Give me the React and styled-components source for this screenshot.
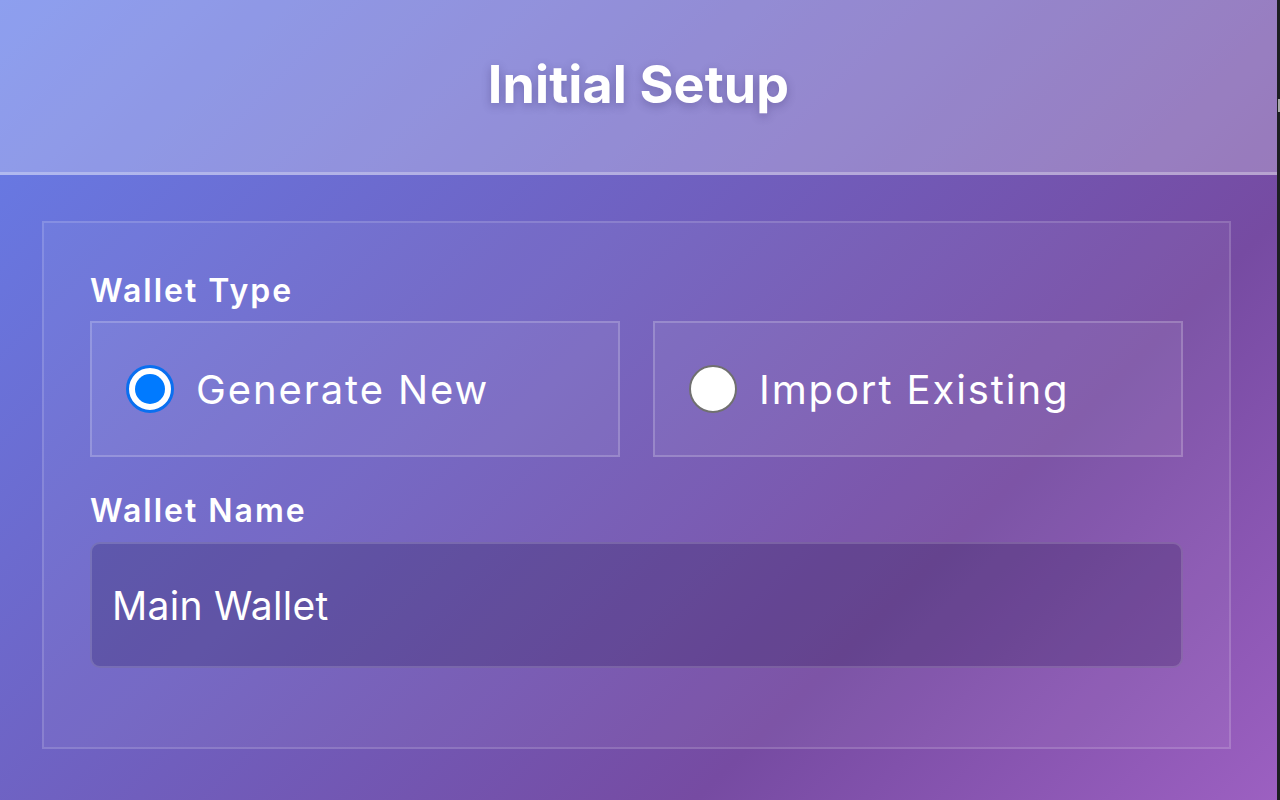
import React from "react";
import styled, { createGlobalStyle } from "styled-components";

const Global = createGlobalStyle`
  html, body { margin: 0; padding: 0; height: 100%; overflow: hidden; }
  body { font-family: Inter, "Noto Sans", "Liberation Sans", sans-serif; }
  #root { height: 100%; }
`;

const Page = styled.div`
  display: flex;
  width: 1280px;
  height: 800px;
  background: #1d1f22;
`;

const Main = styled.div`
  flex: 1;
  display: flex;
  flex-direction: column;
  background: linear-gradient(135deg, #667eea 0%, #764ba2 72%, #9c60c1 100%);
`;

const Header = styled.header`
  height: 172px;
  flex-shrink: 0;
  display: flex;
  align-items: center;
  justify-content: center;
  background: rgba(255, 255, 255, 0.26);
  border-bottom: 3px solid rgba(255, 255, 255, 0.3);
`;

const Title = styled.h1`
  margin: 0 0 4px;
  font-size: 52px;
  font-weight: 700;
  letter-spacing: 0.1px;
  color: #ffffff;
  text-shadow: 0 3px 10px rgba(40, 30, 90, 0.3);
`;

const Body = styled.main`
  flex: 1;
  padding: 46px 46px 0 42px;
`;

const Card = styled.section`
  height: 528px;
  box-sizing: border-box;
  padding: 49px 46px 0 46px;
  border: 2px solid rgba(255, 255, 255, 0.15);
  background: rgba(255, 255, 255, 0.05);
  display: flex;
  flex-direction: column;
`;

const Field = styled.div`
  display: flex;
  flex-direction: column;
  margin-bottom: ${(p) => p.$after || 0}px;
`;

const Label = styled.label`
  font-size: 32px;
  line-height: 38px;
  font-weight: 600;
  letter-spacing: 2px;
  color: #ffffff;
  margin-bottom: ${(p) => p.$space}px;
`;

const Options = styled.div`
  display: grid;
  grid-template-columns: 1fr 1fr;
  column-gap: 33px;
`;

const Option = styled.div`
  height: 136px;
  box-sizing: border-box;
  display: flex;
  align-items: center;
  gap: 22px;
  padding-left: 34px;
  border: 2px solid rgba(255, 255, 255, 0.2);
  background: rgba(255, 255, 255, 0.06);
  cursor: pointer;
`;

const Radio = styled.span`
  width: 48px;
  height: 48px;
  box-sizing: border-box;
  border-radius: 50%;
  background: #ffffff;
  border: ${(p) => (p.$checked ? "3px solid #0a6ff0" : "2px solid #707070")};
  flex-shrink: 0;
  display: flex;
  align-items: center;
  justify-content: center;

  &::after {
    content: "";
    display: ${(p) => (p.$checked ? "block" : "none")};
    width: 30px;
    height: 30px;
    border-radius: 50%;
    background: #007aff;
  }
`;

const OptionText = styled.span`
  font-size: 40px;
  font-weight: 400;
  color: #ffffff;
  letter-spacing: 1.9px;
`;

const Input = styled.div`
  height: 126px;
  box-sizing: border-box;
  display: flex;
  align-items: center;
  padding-left: 20px;
  border: 2px solid rgba(255, 255, 255, 0.15);
  border-radius: 10px;
  background: rgba(20, 10, 60, 0.22);
  font-size: 39px;
  color: #ffffff;
  letter-spacing: 0.3px;
`;

const Edge = styled.div`
  width: 3px;
  padding-top: 99px;
  box-sizing: border-box;
`;

const EdgeThumb = styled.div`
  height: 13px;
  margin-left: 1px;
  background: #a9a9a9;
`;

export default function App() {
  return (
    <>
      <Global />
      <Page>
        <Main>
          <Header>
            <Title>Initial Setup</Title>
          </Header>
          <Body>
            <Card>
              <Field $after={35}>
                <Label $space={11}>Wallet Type</Label>
                <Options>
                  <Option>
                    <Radio $checked />
                    <OptionText>Generate New</OptionText>
                  </Option>
                  <Option>
                    <Radio />
                    <OptionText>Import Existing</OptionText>
                  </Option>
                </Options>
              </Field>
              <Field>
                <Label $space={12}>Wallet Name</Label>
                <Input>Main Wallet</Input>
              </Field>
            </Card>
          </Body>
        </Main>
        <Edge>
          <EdgeThumb />
        </Edge>
      </Page>
    </>
  );
}
